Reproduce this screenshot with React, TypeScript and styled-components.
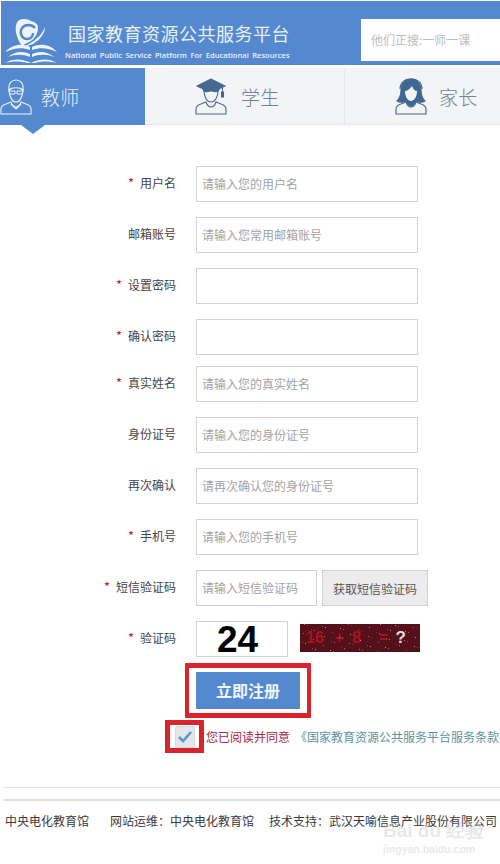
import React from "react";
import styled, { createGlobalStyle } from "styled-components";

const FONT = `"Noto Sans CJK SC", "Liberation Sans", sans-serif`;

const Global = createGlobalStyle`
  html, body { margin: 0; padding: 0; background: #fff; }
  body { font-family: ${FONT}; overflow: hidden; }
  * { box-sizing: border-box; }
`;

const Page = styled.div`
  position: relative;
  width: 500px;
  height: 864px;
  overflow: hidden;
  padding-top: 1px;
`;

const Header = styled.header`
  height: 64px;
  margin-left: 1px;
  background: #5589cf;
  display: flex;
  align-items: flex-start;
  justify-content: space-between;
`;

const Brand = styled.div`
  display: flex;
  padding: 16px 0 0 3px;
`;

const BrandText = styled.div`
  margin: 6px 0 0 7px;
  color: #e8f0fa;
`;

const BrandTitle = styled.div`
  font-size: 18px;
  line-height: 20px;
  font-weight: 400;
  letter-spacing: 0.5px;
  margin-left: 3px;
  white-space: nowrap;
`;

const BrandSub = styled.div`
  font-family: "Open Sans", "Liberation Sans", sans-serif;
  font-size: 7.6px;
  line-height: 10px;
  font-weight: 600;
  margin-top: 7px;
  white-space: nowrap;
  word-spacing: 1.4px;
`;

const Search = styled.div`
  width: 139px;
  height: 42px;
  margin-top: 18px;
  background: #fff;
  color: #bdbdbd;
  font-size: 12px;
  line-height: 42px;
  padding-left: 10px;
`;

const Tabs = styled.nav`
  display: grid;
  grid-template-columns: 145px 199px 156px;
  height: 57px;
  margin-top: 3px;
  background: #f3f4f6;
  border-bottom: 1px solid #e6e7ea;
`;

const Tab = styled.div<{ $active?: boolean; $divider?: boolean; $pad: number; $gap: number }>`
  position: relative;
  display: flex;
  align-items: center;
  gap: ${(p) => p.$gap}px;
  padding-left: ${(p) => p.$pad}px;
  height: ${(p) => (p.$active ? "57px" : "56px")};
  background: ${(p) => (p.$active ? "#5589cf" : "transparent")};
  color: ${(p) => (p.$active ? "#e9f1fb" : "#6f8297")};
  border-left: ${(p) => (p.$divider ? "1px solid #e6e7ea" : "none")};
  font-size: 19px;
  font-weight: 300;
  letter-spacing: 0.3px;
`;

const TabArrow = styled.span`
  position: absolute;
  left: 21px;
  top: 57px;
  border-left: 12px solid transparent;
  border-right: 12px solid transparent;
  border-top: 9px solid #5589cf;
`;

const Form = styled.form`
  display: flex;
  flex-direction: column;
  gap: 15px;
  padding-top: 41px;
`;

const Row = styled.div<{ $tight?: boolean }>`
  display: flex;
  align-items: center;
  height: 36px;
  margin-top: ${(p) => (p.$tight ? "-4px" : "0")};
`;

const Label = styled.label`
  width: 176px;
  margin-right: 20px;
  text-align: right;
  font-size: 12px;
  color: #444;
  margin-top: -3px;
`;

const Star = styled.span`
  color: #b3232c;
  font-size: 13px;
  margin-right: 6px;
`;

const Field = styled.div<{ $w?: number }>`
  width: ${(p) => p.$w ?? 222}px;
  height: 36px;
  border: 1px solid #d2d2d2;
  background: #fff;
  color: #a3a3a3;
  font-size: 12px;
  line-height: 34px;
  padding-left: 5px;
  white-space: nowrap;
`;

const SmsButton = styled.div`
  width: 106px;
  height: 36px;
  margin-left: 5px;
  border: 1px solid #d2d2d2;
  background: #ececec;
  color: #555;
  font-size: 12px;
  line-height: 36px;
  text-align: center;
  white-space: nowrap;
`;

const Answer = styled.div`
  width: 92px;
  height: 36px;
  border: 1px solid #d2d2d2;
  color: #000;
  font-family: "Liberation Sans", sans-serif;
  font-weight: 700;
  font-size: 37px;
  line-height: 36px;
  padding-left: 20px;
`;

const Captcha = styled.div`
  position: relative;
  width: 120px;
  height: 28px;
  margin: 0 0 2px 12px;
  background: #56101a;
  display: flex;
  align-items: center;
  font-family: "Liberation Sans", sans-serif;
  font-weight: 700;
  font-size: 16px;
  color: #a8141c;
  padding-left: 6px;
  white-space: pre;
`;

const CaptchaPart = styled.span<{ $gap: number }>`
  margin-left: ${(p) => p.$gap}px;
`;

const CaptchaQ = styled.span`
  margin-left: 7px;
  color: #e8dcdc;
  font-size: 17px;
`;

const Noise = styled.svg`
  position: absolute;
  left: 0;
  top: 0;
`;

const SubmitFrame = styled.div`
  align-self: flex-start;
  margin: -9px 0 0 185px;
  width: 126px;
  height: 55px;
  border: solid #d9232d;
  border-width: 5px 4px;
  padding: 4px 7px;
`;

const Submit = styled.div`
  height: 37px;
  background: #5589cf;
  color: #eef6fb;
  font-size: 16px;
  font-weight: 700;
  line-height: 36px;
  text-align: center;
`;

const Agree = styled.div`
  display: flex;
  align-items: center;
  margin: -13px 0 0 165px;
  height: 33px;
  width: 335px;
  white-space: nowrap;
  font-size: 12px;
`;

const CheckFrame = styled.div`
  flex: none;
  width: 39px;
  height: 33px;
  border: 5px solid #d9232d;
  display: flex;
  align-items: center;
  justify-content: center;
`;

const Check = styled.div`
  width: 20px;
  height: 22px;
  border-radius: 2px;
  background: #e4e6ea;
  border: 1px solid #d5d7dc;
  display: flex;
  align-items: center;
  justify-content: center;
`;

const AgreeRed = styled.span`
  color: #a6283c;
  margin-left: 2px;
`;

const AgreeLink = styled.span`
  color: #5a93a5;
  margin-left: 5px;
`;

const Rule = styled.div<{ $h: number; $top: number; $c: string }>`
  height: ${(p) => p.$h}px;
  background: ${(p) => p.$c};
  margin: ${(p) => p.$top}px 0 0 3px;
`;

const Footer = styled.footer`
  display: flex;
  margin: 11px 0 0 5px;
  font-size: 12px;
  line-height: 17px;
  color: #3a3a3a;
  white-space: nowrap;
`;

const FooterItem = styled.span<{ $gap?: number }>`
  margin-left: ${(p) => p.$gap ?? 0}px;
`;

const Watermark = styled.div`
  position: absolute;
  left: 383px;
  top: 820px;
  color: rgba(190, 190, 190, 0.36);
  font-family: "Liberation Sans", sans-serif;
  font-weight: 700;
  font-size: 19px;
  line-height: 22px;
  white-space: nowrap;
`;

const WatermarkSub = styled.div`
  font-size: 10.5px;
  line-height: 14px;
`;

const Logo = () => (
  <svg width="54" height="46" viewBox="0 0 54 46" fill="#eef4fb">
    <path d="M14 4c4-3 10-2 13 0 4 1 7 3 7 7 0 7-5 13-11 15-2 1-4 2-5 3-1-2-3-4-4-7-2-5-4-13 0-18z" />
    <path d="M31 11c-3-4-10-4-13 0-3 5 0 11 5 11 4 0 6-3 6-6" fill="none" stroke="#5589cf" strokeWidth="2.4" />
    <path d="M41 10c0 6-5 13-12 17-3 1-6 2-8 3 2-3 7-4 11-8 4-3 7-7 9-12z" />
    <path d="M1 35c8-8 17-9 25-5v3c-8-3-16-2-25 2z" />
    <path d="M53 35c-7-8-17-9-25-5v3c8-3 17-2 25 2z" />
    <path d="M4 40c7-6 15-6 22-3v3c-7-3-15-3-22 0z" />
    <path d="M50 40c-7-6-15-6-22-3v3c7-3 15-3 22 0z" />
    <path d="M1 46c8-5 17-4 24-1l2 1 2-1c7-3 16-4 24 1-8-2-16-2-22 0h-8c-6-2-14-2-22 0z" />
  </svg>
);

const Person = ({ color, kind }: { color: string; kind: "teacher" | "student" | "parent" }) => (
  <svg width="32" height="37" viewBox="0 0 32 37" fill="none" stroke={color} strokeWidth="1.1">
    <path d="M1 36v-5c0-3 2-4 5-5l5-2c1 3 3 5 5 5s4-2 5-5l5 2c3 1 5 2 5 5v5z" />
    {kind === "student" && (
      <>
        <path d="M9 13c0 6 3 11 7 11s7-5 7-11c-3 2-5 0-7-1-2 1-4 3-7 1z" />
        <path d="M16 1L2 8l4 2h20l4-2z" fill={color} />
        <path d="M7 10l2 3h14l2-3z" fill={color} />
        <path d="M27.500 9v5" />
        <path d="M26.500 14h2v5h-2z" fill={color} />
      </>
    )}
    {kind === "teacher" && (
      <>
        <path d="M9 11c0 7 3 13 7 13s7-6 7-13" />
        <path d="M9 12c-1-7 3-10 7-10s8 3 7 10c-3-3-11-3-14 0z" />
        <path d="M9 13h6v3h-5zM17 13h6l-1 3h-5z" strokeWidth="1" />
        <path d="M11 26l5 5 5-5" />
      </>
    )}
    {kind === "parent" && (
      <>
        <path d="M16 1c-7 0-10 5-10 11 0 5-1 8-4 11 3 2 7 1 9 0 2 3 3 5 5 5s3-2 5-5c2 1 6 2 9 0-3-3-4-6-4-11 0-6-3-11-10-11z" fill={color} />
        <path d="M10 13c2 0 5-2 7-5 1 3 3 5 5 5 0 6-3 10-6 10s-6-4-6-10z" fill="#f3f4f6" stroke="none" />
        <path d="M5 11c0-7 5-10 11-10s11 3 11 10" />
      </>
    )}
  </svg>
);

const speckles = Array.from({ length: 70 }, (_, i) => ({
  x: (i * 37 + 11) % 120,
  y: (i * 23 + 5) % 28,
  o: 0.25 + ((i * 7) % 5) / 8,
}));

const fields: { label: string; req?: boolean; ph?: string; tight?: boolean }[] = [
  { label: "用户名", req: true, ph: "请输入您的用户名" },
  { label: "邮箱账号", ph: "请输入您常用邮箱账号" },
  { label: "设置密码", req: true },
  { label: "确认密码", req: true },
  { label: "真实姓名", req: true, ph: "请输入您的真实姓名", tight: true },
  { label: "身份证号", ph: "请输入您的身份证号" },
  { label: "再次确认", ph: "请再次确认您的身份证号" },
  { label: "手机号", req: true, ph: "请输入您的手机号" },
];

export default function App() {
  return (
    <Page>
      <Global />
      <Header>
        <Brand>
          <Logo />
          <BrandText>
            <BrandTitle>国家教育资源公共服务平台</BrandTitle>
            <BrandSub>National Public Service Platform For Educational Resources</BrandSub>
          </BrandText>
        </Brand>
        <Search>他们正搜:一师一课</Search>
      </Header>
      <Tabs>
        <Tab $active $pad={0} $gap={9}>
          <Person color="#eef4fb" kind="teacher" />
          教师
          <TabArrow />
        </Tab>
        <Tab $pad={50} $gap={14}>
          <Person color="#45698f" kind="student" />
          学生
        </Tab>
        <Tab $divider $pad={50} $gap={12}>
          <Person color="#3f6791" kind="parent" />
          家长
        </Tab>
      </Tabs>
      <Form>
        {fields.map((f) => (
          <Row key={f.label} $tight={f.tight}>
            <Label>
              {f.req && <Star>*</Star>}
              {f.label}
            </Label>
            <Field>{f.ph}</Field>
          </Row>
        ))}
        <Row>
          <Label>
            <Star>*</Star>短信验证码
          </Label>
          <Field $w={121}>请输入短信验证码</Field>
          <SmsButton>获取短信验证码</SmsButton>
        </Row>
        <Row>
          <Label>
            <Star>*</Star>验证码
          </Label>
          <Answer>24</Answer>
          <Captcha>
            <Noise width="120" height="28" viewBox="0 0 120 28">
              {speckles.map((s, i) => (
                <rect key={i} x={s.x} y={s.y} width="1" height="1" fill="#d8b0b0" opacity={s.o} />
              ))}
            </Noise>
            <span>16</span>
            <CaptchaPart $gap={11}>+</CaptchaPart>
            <CaptchaPart $gap={8}>8</CaptchaPart>
            <CaptchaPart $gap={18}>=</CaptchaPart>
            <CaptchaQ>?</CaptchaQ>
          </Captcha>
        </Row>
        <SubmitFrame>
          <Submit>立即注册</Submit>
        </SubmitFrame>
        <Agree>
          <CheckFrame>
            <Check>
              <svg width="14" height="12" viewBox="0 0 14 12" fill="none" stroke="#5f97cf" strokeWidth="2.6">
                <path d="M1 6l4 4 8-9" />
              </svg>
            </Check>
          </CheckFrame>
          <AgreeRed>您已阅读并同意</AgreeRed>
          <AgreeLink>《国家教育资源公共服务平台服务条款</AgreeLink>
        </Agree>
      </Form>
      <Rule $h={1} $top={34} $c="#e6e6e6" />
      <Rule $h={2} $top={11} $c="#dedede" />
      <Footer>
        <FooterItem>中央电化教育馆</FooterItem>
        <FooterItem $gap={21}>网站运维：中央电化教育馆</FooterItem>
        <FooterItem $gap={15}>技术支持：武汉天喻信息产业股份有限公司</FooterItem>
      </Footer>
      <Watermark>
        Bai du 经验
        <WatermarkSub>jingyan.baidu.com</WatermarkSub>
      </Watermark>
    </Page>
  );
}
